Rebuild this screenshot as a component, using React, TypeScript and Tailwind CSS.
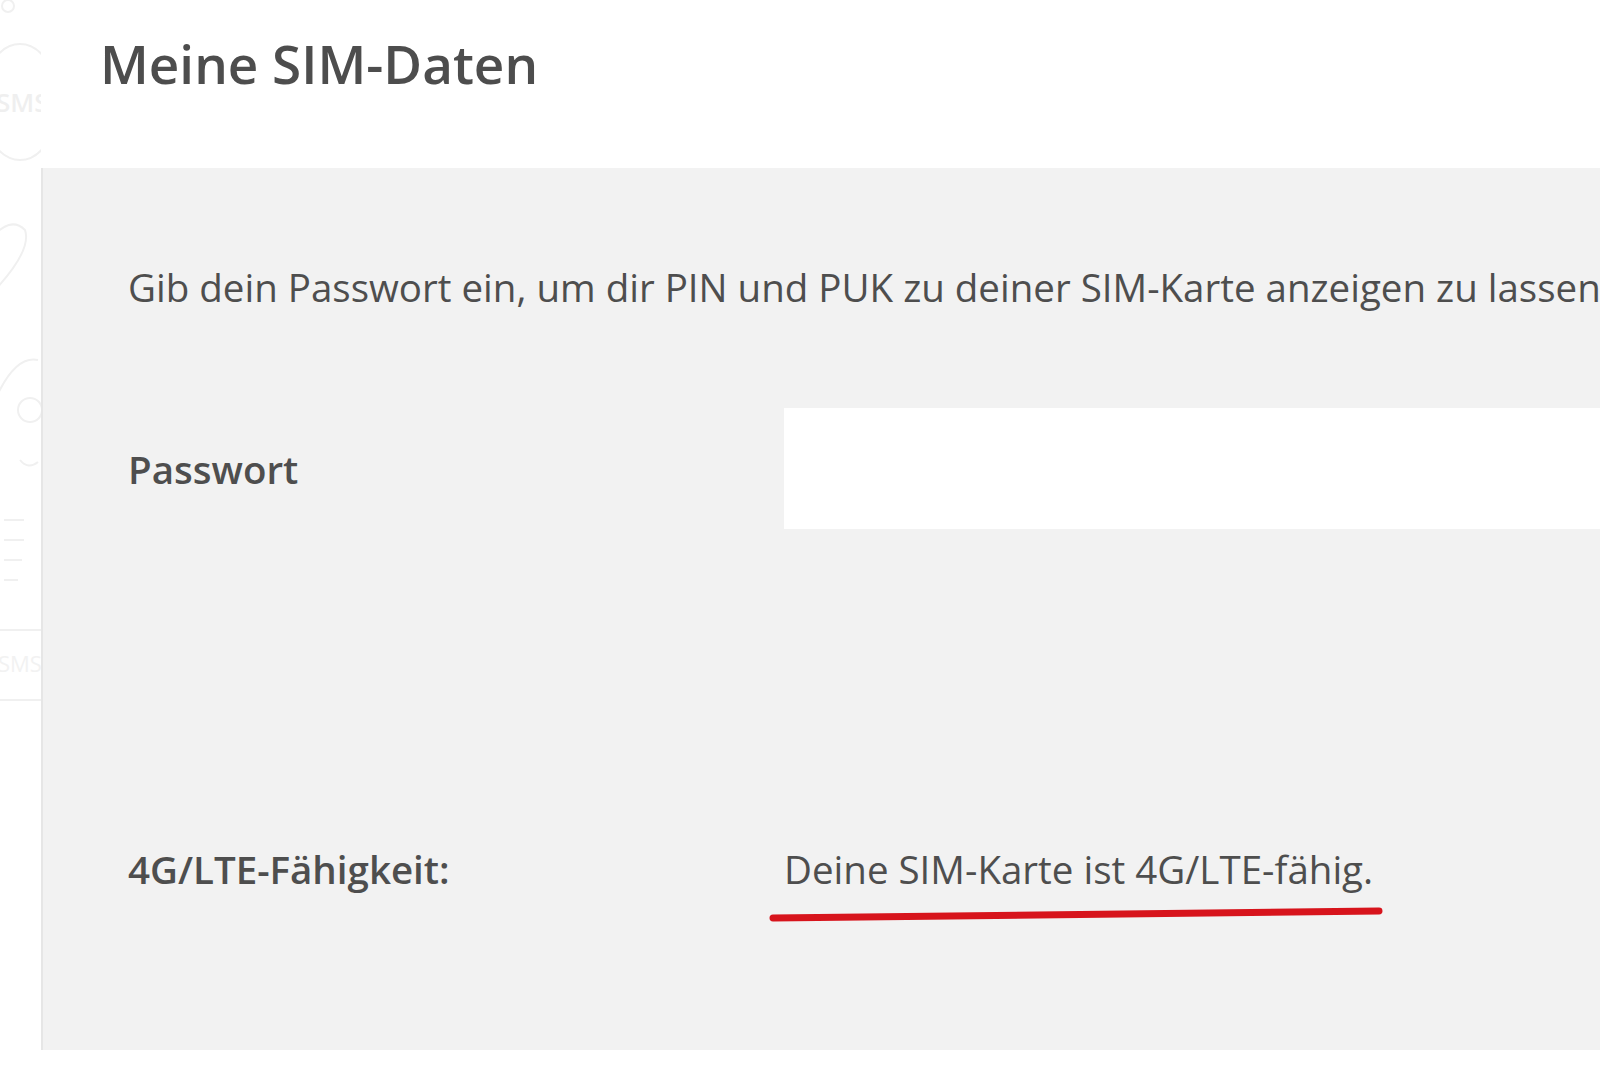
export default function App() {
  return (
    <div
      className="w-[1600px] h-[1082px] overflow-hidden bg-white flex text-[#4e4e4e]"
      style={{ fontFamily: '"Open Sans", "Liberation Sans", sans-serif' }}
    >
      {/* Ghosted side navigation */}
      <aside className="w-[41px] shrink-0 overflow-hidden">
        <svg width="41" height="760" viewBox="0 0 41 760" fill="none" stroke="#f0f0f0" strokeWidth="2">
          <circle cx="8" cy="6" r="6" />
          <ellipse cx="20" cy="102" rx="38" ry="58" />
          <text x="-4" y="112" fill="#efefef" stroke="none" fontSize="26" fontFamily="Open Sans" fontWeight="600">SMS</text>
          <path d="M-10 240 Q 10 215 25 230 Q 32 250 -5 290" />
          <path d="M-5 400 Q 15 355 38 360" />
          <circle cx="30" cy="410" r="12" />
          <path d="M20 460 Q 28 470 38 462" />
          <path d="M4 520 H 24 M4 540 H 24 M4 560 H 22 M4 580 H 18" />
          <path d="M0 630 H 41 M0 700 H 41" />
          <text x="-2" y="672" fill="#f2f2f2" stroke="none" fontSize="22" fontFamily="Open Sans">SMS</text>
        </svg>
      </aside>

      <main className="flex-1 flex flex-col">
        <h1 className="pl-[59px] pt-[29px] h-[168px] text-[53px] font-semibold leading-[70px] text-[#4d4d4d]">
          Meine SIM-Daten
        </h1>

        <section className="h-[882px] bg-[#f2f2f2] border-l-2 border-[#e6e6e6] pl-[85px] pt-[97px] flex flex-col">
          <p className="text-[38.5px] leading-[44px] whitespace-nowrap">
            Gib dein Passwort ein, um dir PIN und PUK zu deiner SIM-Karte anzeigen zu lassen.
          </p>

          <div className="mt-[99px] flex items-center">
            <label className="w-[656px] shrink-0 text-[38.5px] font-semibold leading-[44px]">Passwort</label>
            <input type="password" className="flex-1 h-[121px] bg-white outline-none" />
          </div>

          <div className="mt-[318px] flex items-center">
            <span className="w-[656px] shrink-0 text-[38.5px] font-semibold leading-[44px]">4G/LTE-Fähigkeit:</span>
            <span className="relative text-[38.5px] leading-[44px] whitespace-nowrap">
              Deine SIM-Karte ist 4G/LTE-fähig.
              <svg
                className="absolute left-[-16px] top-[60px]"
                width="616"
                height="16"
                viewBox="0 0 616 16"
                fill="none"
              >
                <path d="M5 11 L 611 4" stroke="#d7141c" strokeWidth="7" strokeLinecap="round" />
              </svg>
            </span>
          </div>
        </section>
      </main>
    </div>
  );
}
